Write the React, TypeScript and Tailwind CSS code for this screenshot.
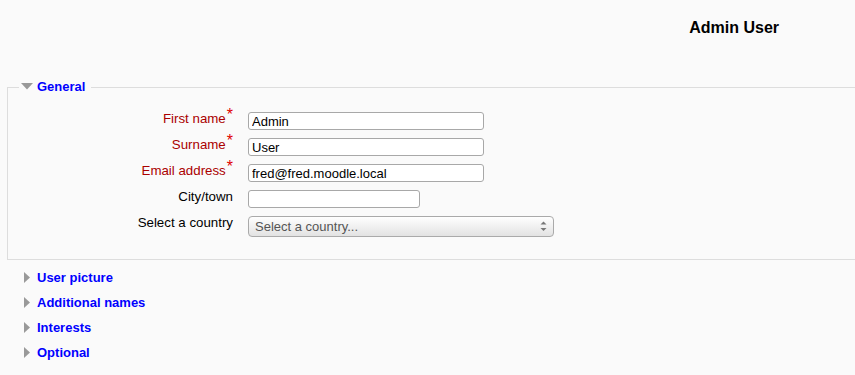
import { useState } from "react";

const fields = [
  { label: "First name", value: "Admin", required: true, width: "w-[236px]" },
  { label: "Surname", value: "User", required: true, width: "w-[236px]" },
  { label: "Email address", value: "fred@fred.moodle.local", required: true, width: "w-[236px]" },
  { label: "City/town", value: "", required: false, width: "w-[172px]" },
];

const sections = ["User picture", "Additional names", "Interests", "Optional"];

const App = () => {
  const [values, setValues] = useState(fields.map((f) => f.value));

  return (
    <div className="w-[855px] h-[375px] overflow-hidden bg-[#fafafa] text-[13.3px] text-black font-['Liberation_Sans',Arial,sans-serif]">
      {/* Page heading */}
      <div className="flex justify-end pr-[76px] pt-[18px] h-[79px]">
        <h2 className="text-[16px] font-bold leading-[20px]">Admin User</h2>
      </div>

      {/* General fieldset */}
      <fieldset className="ml-[7px] mr-[-20px] border border-[#dddddd] pb-[17px]">
        <legend className="ml-[11px] pl-[2px] pr-[6px] flex items-center gap-[4px] leading-[16px]">
          <svg width="12" height="7" viewBox="0 0 12 7" className="mt-[-1px]">
            <polygon points="0,0 12,0 6,6.5" fill="#999999" />
          </svg>
          <a href="#" className="font-bold text-[13px] text-[#0000ff]">General</a>
        </legend>

        <div className="pt-[17px]">
          {fields.map((f, i) => (
            <div key={f.label} className="flex h-[26px]">
              <label
                className={`w-[225px] text-right leading-[14px] ${
                  f.required ? "text-[#aa0000]" : "text-black"
                }`}
              >
                {f.label}
                {f.required && (
                  <span className="relative -top-[3px] ml-[1px] text-[16px] leading-[0] text-[#e00000]">*</span>
                )}
              </label>
              <input
                type="text"
                value={values[i]}
                onChange={(e) => {
                  const next = [...values];
                  next[i] = e.target.value;
                  setValues(next);
                }}
                className={`ml-[15px] h-[18px] ${f.width} bg-white border border-[#a8a8a8] rounded-[3px] px-[3px] text-[13px] leading-[16px] text-black outline-none`}
              />
            </div>
          ))}

          <div className="flex h-[26px]">
            <label className="w-[225px] text-right leading-[14px]">Select a country</label>
            <div className="ml-[15px] relative h-[21px] w-[306px] rounded-[4px] border border-[#aaaaaa] bg-gradient-to-b from-white to-[#e2e2e2] flex items-center pl-[6px] text-[13px] text-[#555555]">
              <span className="leading-[18px]">Select a country...</span>
              <svg width="7" height="11" viewBox="0 0 7 11" className="absolute right-[6px] top-[4px]">
                <polygon points="3.5,0.5 6.5,3.5 0.5,3.5" fill="#777777" />
                <polygon points="0.5,7 6.5,7 3.5,10" fill="#777777" />
              </svg>
            </div>
          </div>
        </div>
      </fieldset>

      {/* Collapsed sections */}
      <div className="mt-[5px]">
        {sections.map((s) => (
          <div key={s} className="flex items-center h-[25px] pl-[24px] gap-[7px]">
            <svg width="6" height="11" viewBox="0 0 6 11">
              <polygon points="0,0 6,5.5 0,11" fill="#999999" />
            </svg>
            <a href="#" className="font-bold text-[13px] text-[#0000ff] leading-[16px]">{s}</a>
          </div>
        ))}
      </div>
    </div>
  );
};

export default App;
